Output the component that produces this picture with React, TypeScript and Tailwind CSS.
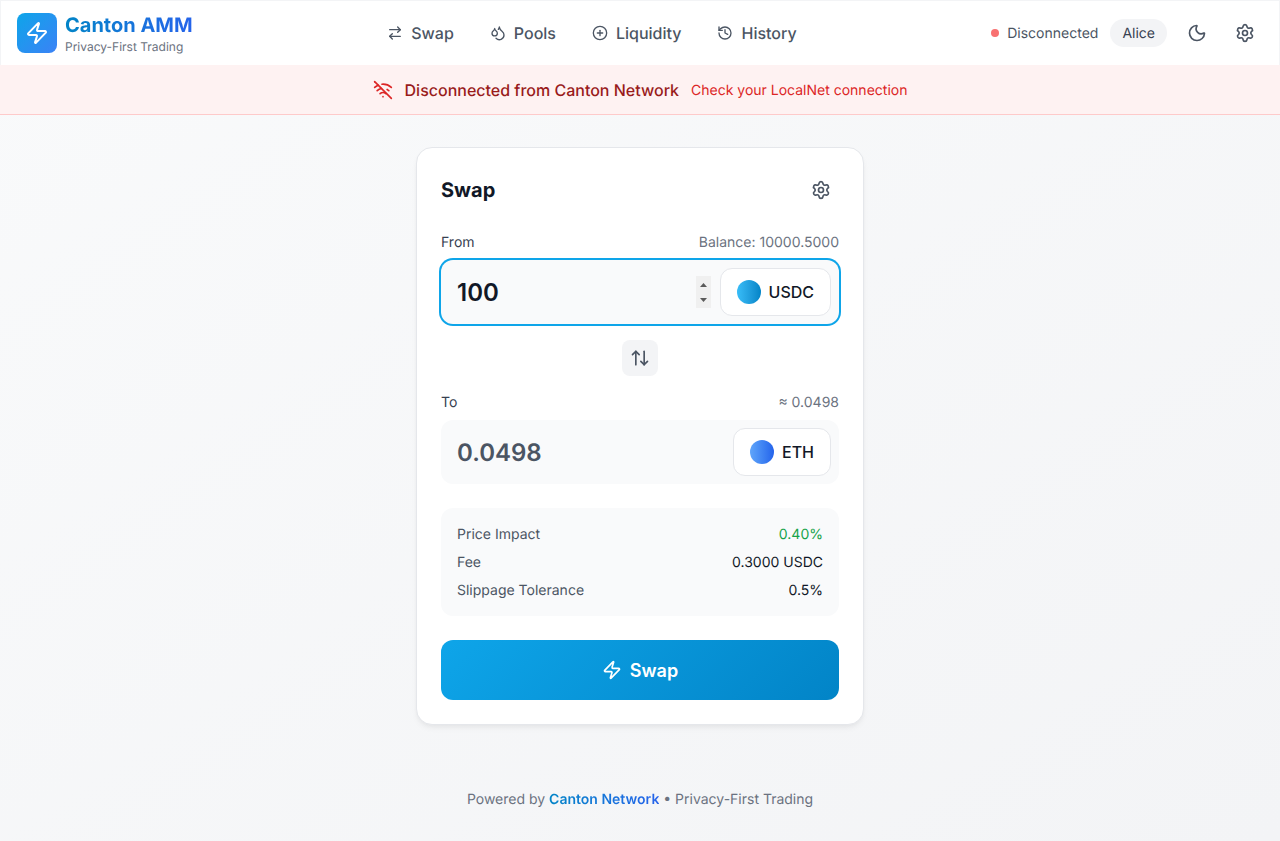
import React from 'react';
import { ArrowRightLeft, ArrowUpDown, Droplets, History, Moon, PlusCircle, Settings, WifiOff, Zap } from 'lucide-react';

const navItems = [
  { label: 'Swap', icon: ArrowRightLeft },
  { label: 'Pools', icon: Droplets },
  { label: 'Liquidity', icon: PlusCircle },
  { label: 'History', icon: History },
];

const TokenButton: React.FC<{ symbol: string; coin: string }> = ({ symbol, coin }) => (
  <button className="h-12 flex items-center gap-2 px-4 bg-white border border-[#e5e7eb] rounded-xl shrink-0">
    <span className={`w-6 h-6 rounded-full ${coin}`}></span>
    <span className="text-base font-medium text-[#111827]">{symbol}</span>
  </button>
);

const App: React.FC = () => {
  return (
    <div className="min-h-screen bg-gradient-to-br from-[#f9fafb] to-[#f3f4f6] font-['Inter',sans-serif] [text-rendering:geometricPrecision]">
      <header className="h-[65px] bg-white border-t border-l border-r border-[#f3f4f6] px-4 flex items-center justify-between">
        <div className="flex items-center gap-2">
          <div className="w-10 h-10 rounded-lg bg-[linear-gradient(135deg,#0ea5e9,#3b82f6)] flex items-center justify-center">
            <Zap size={24} className="text-white" />
          </div>
          <div>
            <div className="text-xl leading-7 font-bold bg-gradient-to-r from-[#0284c7] to-[#2563eb] bg-clip-text text-transparent">Canton AMM</div>
            <div className="text-xs leading-4 text-[#6b7280]">Privacy-First Trading</div>
          </div>
        </div>
        <nav className="flex items-center gap-1">
          {navItems.map(({ label, icon: Icon }) => (
            <a key={label} className="flex items-center gap-2 px-4 py-2 text-base font-medium text-[#4b5563]">
              <Icon size={16} />
              {label}
            </a>
          ))}
        </nav>
        <div className="flex items-center gap-3">
          <div className="flex items-center gap-2">
            <span className="w-2 h-2 rounded-full bg-[#f87171]"></span>
            <span className="pt-0.5 text-sm text-[#4b5563]">Disconnected</span>
          </div>
          <span className="px-3 pt-[5px] pb-[3px] rounded-full bg-[#f3f4f6] text-sm text-[#374151]">Alice</span>
          <button className="p-2 text-[#4b5563]"><Moon size={20} /></button>
          <button className="p-2 text-[#4b5563]"><Settings size={20} /></button>
        </div>
      </header>

      <div className="h-[50px] bg-[#fef2f2] border-b border-[#fecaca] flex items-center justify-center gap-3">
        <WifiOff size={20} className="text-[#dc2626]" />
        <span className="text-base font-medium text-[#991b1b]">Disconnected from Canton Network</span>
        <span className="pt-0.5 text-sm text-[#dc2626]">Check your LocalNet connection</span>
      </div>

      <main className="pt-8 flex justify-center">
        <div className="w-[448px] bg-white border border-[#e5e7eb] rounded-2xl shadow-[0_4px_6px_-1px_rgba(0,0,0,0.05),0_2px_4px_-1px_rgba(0,0,0,0.03)] p-6">
          <div className="flex items-center justify-between mb-6">
            <h2 className="text-xl font-bold text-[#111827]">Swap</h2>
            <button className="p-2 text-[#4b5563]"><Settings size={20} /></button>
          </div>

          <div className="h-5 pt-px flex items-start justify-between mb-2 text-sm">
            <label className="text-[#374151]">From</label>
            <span className="text-[#6b7280]">Balance: 10000.5000</span>
          </div>
          <div className="h-16 flex items-center bg-[#f9fafb] rounded-xl pl-4 pr-2 ring-2 ring-[#0ea5e9]">
            <input
              type="number"
              defaultValue="100"
              className="flex-1 min-w-0 pt-0.5 bg-transparent outline-none text-2xl font-semibold text-[#111827] [appearance:textfield] [&::-webkit-inner-spin-button]:appearance-none"
            />
            <div className="w-[15px] h-8 mr-[9px] bg-[#f0f0f0] flex flex-col items-center justify-center gap-[11px] shrink-0">
              <svg width="7" height="4" viewBox="0 0 7 4"><path d="M3.5 0L7 4H0z" fill="#5a5a5a" /></svg>
              <svg width="7" height="4" viewBox="0 0 7 4"><path d="M0 0h7L3.5 4z" fill="#5a5a5a" /></svg>
            </div>
            <TokenButton symbol="USDC" coin="bg-gradient-to-r from-[#38bdf8] to-[#0284c7]" />
          </div>

          <div className="flex justify-center my-4">
            <button className="w-9 h-9 rounded-lg bg-[#f3f4f6] flex items-center justify-center text-[#4b5563]">
              <ArrowUpDown size={20} />
            </button>
          </div>

          <div className="h-5 pt-px flex items-start justify-between mb-2 text-sm">
            <label className="text-[#374151]">To</label>
            <span className="text-[#6b7280]">≈ 0.0498</span>
          </div>
          <div className="h-16 flex items-center bg-[#f9fafb] rounded-xl pl-4 pr-2">
            <div className="flex-1 pt-0.5 text-2xl font-semibold text-[#4b5563]">0.0498</div>
            <TokenButton symbol="ETH" coin="bg-gradient-to-r from-[#60a5fa] to-[#2563eb]" />
          </div>

          <div className="mt-6 px-4 pt-[17px] pb-[15px] bg-[#f9fafb] rounded-xl flex flex-col gap-2 text-sm">
            <div className="flex justify-between">
              <span className="text-[#4b5563]">Price Impact</span>
              <span className="text-[#16a34a]">0.40%</span>
            </div>
            <div className="flex justify-between">
              <span className="text-[#4b5563]">Fee</span>
              <span className="text-[#111827]">0.3000 USDC</span>
            </div>
            <div className="flex justify-between">
              <span className="text-[#4b5563]">Slippage Tolerance</span>
              <span className="text-[#111827]">0.5%</span>
            </div>
          </div>

          <button className="mt-6 w-full h-[60px] rounded-xl bg-[linear-gradient(135deg,#0ea5e9,#0284c7)] flex items-center justify-center gap-2 text-lg font-semibold text-white">
            <Zap size={20} />
            <span className="pt-0.5">Swap</span>
          </button>
        </div>
      </main>

      <footer className="mt-8 pt-[33px] pb-[31px] text-center text-sm text-[#6b7280]">
        Powered by{' '}
        <span className="font-semibold bg-gradient-to-r from-[#0284c7] to-[#2563eb] bg-clip-text text-transparent">Canton Network</span>
        {' '}• Privacy-First Trading
      </footer>
    </div>
  );
};

export default App;
